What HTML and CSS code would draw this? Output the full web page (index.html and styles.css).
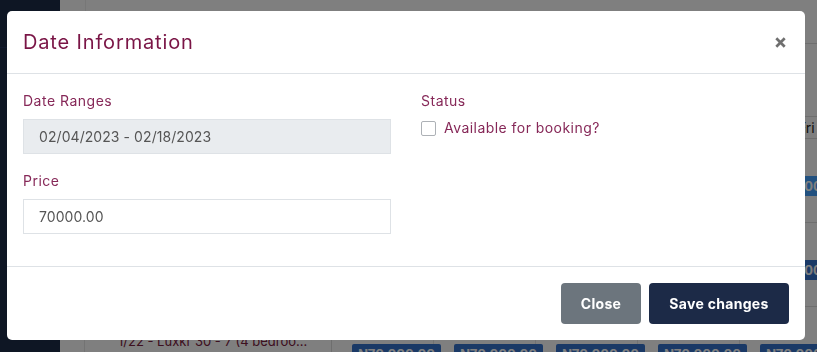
FILE: index.html
```html
<!DOCTYPE html>
<html lang="en">
<head>
<meta charset="utf-8">
<title>Date Information</title>
<link rel="stylesheet" href="styles.css">
</head>
<body>
<div class="app">
  <aside class="sidebar"><div class="sidebar-top"></div></aside>
  <main class="main">
    <div class="toolbar"></div>
    <div class="subbar"></div>
    <div class="cal-row cal-head">
      <div class="cal-gutter"></div>
      <div class="cal-name"></div>
      <div class="cal-day"></div>
      <div class="cal-day"></div>
      <div class="cal-day"></div>
      <div class="cal-day"></div>
      <div class="cal-day day-label">Fri</div>
    </div>
    <div class="cal-row">
      <div class="cal-gutter"></div>
      <div class="cal-name">1/20 - Luxkr 30 - 5 (4 bedroo...</div>
      <div class="cal-day"><span class="badge">₦70,000.00</span></div>
      <div class="cal-day"><span class="badge">₦70,000.00</span></div>
      <div class="cal-day"><span class="badge">₦70,000.00</span></div>
      <div class="cal-day"><span class="badge">₦70,000.00</span></div>
      <div class="cal-day"><span class="badge badge-bright">₦70,000.00</span></div>
    </div>
    <div class="cal-row">
      <div class="cal-gutter"></div>
      <div class="cal-name">1/21 - Luxkr 30 - 6 (4 bedroo...</div>
      <div class="cal-day"><span class="badge">₦70,000.00</span></div>
      <div class="cal-day"><span class="badge">₦70,000.00</span></div>
      <div class="cal-day"><span class="badge">₦70,000.00</span></div>
      <div class="cal-day"><span class="badge">₦70,000.00</span></div>
      <div class="cal-day"><span class="badge">₦70,000.00</span></div>
    </div>
    <div class="cal-row">
      <div class="cal-gutter"></div>
      <div class="cal-name">1/22 - Luxkr 30 - 7 (4 bedroo...</div>
      <div class="cal-day"><span class="badge">₦70,000.00</span></div>
      <div class="cal-day"><span class="badge">₦70,000.00</span></div>
      <div class="cal-day"><span class="badge">₦70,000.00</span></div>
      <div class="cal-day"><span class="badge">₦70,000.00</span></div>
      <div class="cal-day"><span class="badge">₦70,000.00</span></div>
    </div>
  </main>
</div>

<div class="backdrop"></div>

<div class="modal-wrap">
  <div class="modal">
    <div class="modal-header">
      <h5 class="modal-title">Date Information</h5>
      <button class="close" type="button" aria-label="Close">
        <svg class="close-icon" viewBox="0 0 11 11" width="11" height="11">
          <path d="M1.3 1.3 L9.7 9.7 M9.7 1.3 L1.3 9.7" />
        </svg>
      </button>
    </div>
    <div class="modal-body">
      <div class="form-row">
        <div class="form-col">
          <div class="form-group">
            <label class="form-label">Date Ranges</label>
            <div class="form-control readonly">02/04/2023 - 02/18/2023</div>
          </div>
          <div class="form-group">
            <label class="form-label">Price</label>
            <div class="form-control">70000.00</div>
          </div>
        </div>
        <div class="form-col">
          <div class="form-group">
            <label class="form-label">Status</label>
            <label class="check">
              <span class="check-box"></span>
              <span class="check-label">Available for booking?</span>
            </label>
          </div>
        </div>
      </div>
    </div>
    <div class="modal-footer">
      <button class="btn btn-secondary" type="button">Close</button>
      <button class="btn btn-primary" type="button">Save changes</button>
    </div>
  </div>
</div>
</body>
</html>
```

FILE: styles.css
```css
* { box-sizing: border-box; }

html, body {
  margin: 0;
  padding: 0;
  height: 100%;
  overflow: hidden;
}

body {
  font-family: "Inter", "Noto Sans", sans-serif;
  font-size: 14px;
  color: #333;
  background: #fff;
}

/* ---------- background app ---------- */
.app {
  display: flex;
  height: 352px;
  overflow: hidden;
}

.sidebar {
  flex: 0 0 60px;
  background: #1c2c48;
}

.sidebar-top {
  height: 48px;
  border-bottom: 1px solid #22355a;
}

.main {
  flex: 1;
  min-width: 0;
  overflow: hidden;
  background: #fff;
}

.toolbar {
  height: 44px;
  border-bottom: 1px solid #dcdcdc;
  margin-left: 25px;
  border-left: 1px solid #eee;
}

.subbar {
  height: 73px;
  border-bottom: 1px solid #dcdcdc;
}

.cal-row {
  display: grid;
  grid-template-columns: 25px 247px repeat(5, 102px);
  height: 84px;
  border-bottom: 1px solid #dcdcdc;
}

.cal-head {
  height: 22px;
}

.cal-gutter {
  border-right: 1px solid #e6e6e6;
}

.cal-name {
  padding: 26px 0 0 33px;
  font-size: 13px;
  color: #7a2040;
  white-space: nowrap;
  overflow: hidden;
  border-right: 1px solid #dcdcdc;
}

.cal-day {
  padding: 37px 0 0 20px;
  border-right: 1px solid #e6e6e6;
}

.day-label {
  padding: 2px 0 0 58px;
  color: #222;
  font-size: 14px;
}

.badge {
  display: inline-block;
  width: 89px;
  height: 20px;
  line-height: 20px;
  background: #3472cc;
  color: #fff;
  font-weight: 700;
  font-size: 13px;
  text-align: center;
  border-radius: 2px;
  white-space: nowrap;
  overflow: hidden;
}

.badge-bright {
  background: #42a0ff;
}

/* ---------- backdrop + modal ---------- */
.backdrop {
  position: fixed;
  inset: 0;
  background: rgba(0, 0, 0, 0.5);
}

.modal-wrap {
  position: fixed;
  inset: 0;
  padding: 11px 0 0 7px;
}

.modal {
  width: 798px;
  background: #fff;
  border-radius: 5px;
  overflow: hidden;
}

.modal-header {
  display: flex;
  align-items: center;
  justify-content: space-between;
  padding: 16px 19px 16px 16px;
  border-bottom: 1px solid #dee2e6;
}

.modal-title {
  margin: 0;
  font-size: 20px;
  font-weight: 400;
  line-height: 30px;
  letter-spacing: 0.85px;
  color: #7a1546;
}

.close {
  display: flex;
  align-items: center;
  justify-content: center;
  padding: 0;
  border: 0;
  background: none;
  width: 11px;
  height: 11px;
  cursor: pointer;
}

.close-icon path {
  fill: none;
  stroke: #6f6f6f;
  stroke-width: 2.7;
}

.modal-body {
  padding: 16px;
}

.form-row {
  display: flex;
  margin: 0 -15px;
}

.form-col {
  flex: 0 0 50%;
  padding: 0 15px;
}

.form-group {
  margin-bottom: 16px;
}

.form-label {
  display: block;
  margin-bottom: 8px;
  font-size: 14px;
  line-height: 21px;
  letter-spacing: 0.5px;
  color: #862858;
}

.form-control {
  height: 35px;
  padding: 0 15px;
  display: flex;
  align-items: center;
  border: 1px solid #dee2e6;
  background: #fff;
  color: #555;
  font-size: 14px;
  letter-spacing: 0.07px;
}

.form-control.readonly {
  background: #e9ecef;
}

.check {
  display: flex;
  align-items: center;
  gap: 8px;
  margin-top: 1px;
}

.check-box {
  flex: 0 0 auto;
  width: 15px;
  height: 15px;
  border: 1px solid #adb1b6;
  border-radius: 2px;
  background: #fff;
}

.check-label {
  font-size: 14px;
  line-height: 18px;
  letter-spacing: 0.45px;
  color: #862858;
}

.modal-footer {
  display: flex;
  justify-content: flex-end;
  align-items: center;
  padding: 12px;
  border-top: 1px solid #dee2e6;
}

.btn {
  margin: 4px;
  height: 41px;
  padding: 0 20px;
  border: 1px solid transparent;
  border-radius: 4px;
  font-family: inherit;
  font-size: 14px;
  font-weight: 700;
  letter-spacing: 0.3px;
  color: #fff;
  cursor: pointer;
}

.btn-secondary {
  background: #6c757d;
  width: 80px;
  padding: 0;
}

.btn-primary {
  background: #1c2a47;
  width: 140px;
  padding: 0;
}
```
